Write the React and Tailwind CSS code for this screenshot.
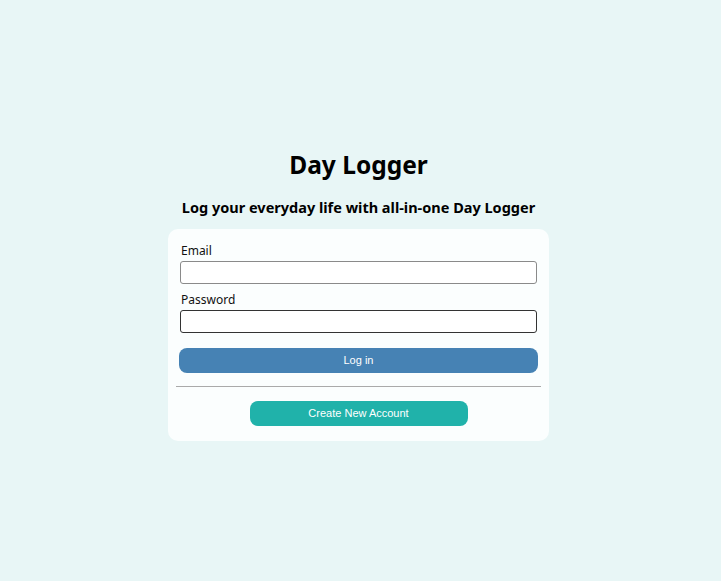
export default function App() {
  return (
    <div className="min-h-screen w-full bg-[#e8f6f6] flex flex-col items-center justify-center pt-[12px] pr-[4px]" style={{ fontFamily: '"Noto Sans", "Open Sans", sans-serif' }}>
      <h1 className="text-[24.5px] font-bold text-black leading-none">Day Logger</h1>
      <h2 className="mt-[23px] text-[14.5px] font-bold text-black leading-none">Log your everyday life with all-in-one Day Logger</h2>
      <div className="mt-[14px] w-[381px] bg-[#fbfefe] rounded-[10px] px-[12px] pt-[14px] pb-[15px] flex flex-col">
        <label className="text-[12px] text-[#111] leading-[16px] pl-px">Email</label>
        <input className="mt-[2px] h-[23px] border border-[#8a8a8a] rounded-[3px] bg-white" />
        <label className="mt-[8px] text-[12px] text-[#111] leading-[16px] pl-px">Password</label>
        <input className="mt-[2px] h-[23px] border border-[#333] rounded-[3px] bg-white" />
        <button className="mt-[15px] -mx-[1px] h-[25px] rounded-[8px] bg-[#4682b4] text-white text-[11px]" style={{ fontFamily: '"Liberation Sans", Arial, sans-serif' }}>Log in</button>
        <div className="mt-[13px] -mx-[4px] h-px bg-[#aaaaaa]" />
        <button className="mt-[14px] self-center w-[218px] h-[25px] rounded-[8px] bg-[#20b2aa] text-white text-[11px]" style={{ fontFamily: '"Liberation Sans", Arial, sans-serif' }}>Create New Account</button>
      </div>
    </div>
  );
}
